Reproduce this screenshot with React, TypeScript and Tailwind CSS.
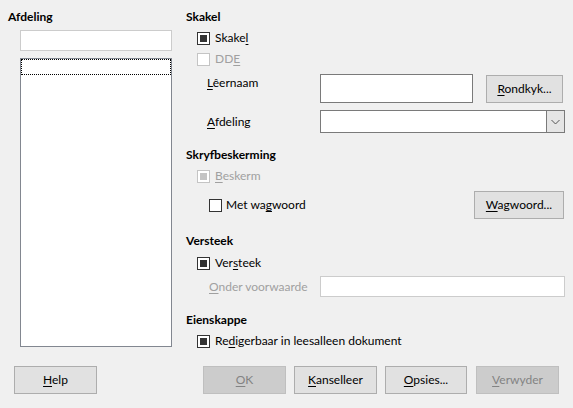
import React from "react";

const dis = "text-[#a0a0a0]";

function U({ children }: { children: React.ReactNode }) {
  return <span className="underline underline-offset-2 decoration-1">{children}</span>;
}

function Check({ checked, disabled }: { checked?: boolean; disabled?: boolean }) {
  return (
    <span
      className={
        "flex w-[13px] h-[13px] shrink-0 items-center justify-center border bg-white " +
        (disabled ? "border-[#c4c4c4]" : "border-[#333333]")
      }
    >
      {checked && <span className={"w-[7px] h-[7px] " + (disabled ? "bg-[#c4c4c4]" : "bg-[#333333]")} />}
    </span>
  );
}

function Btn({
  children,
  w,
  disabled,
}: {
  children: React.ReactNode;
  w: string;
  disabled?: boolean;
}) {
  return (
    <div
      className={
        "flex h-[28px] items-center justify-center border " +
        w +
        " " +
        (disabled
          ? "bg-[#cccccc] border-[#bfbfbf] text-[#838383]"
          : "bg-[#e1e1e1] border-[#adadad] text-black")
      }
    >
      {children}
    </div>
  );
}

function Header({ children, className = "" }: { children: React.ReactNode; className?: string }) {
  return <div className={"h-[18px] flex items-center font-bold " + className}>{children}</div>;
}

export default function App() {
  return (
    <div
      className="w-[573px] h-[408px] bg-[#f0f0f0] text-black text-[12px] leading-none flex flex-col overflow-hidden"
      style={{ fontFamily: "Lato, 'Liberation Sans', sans-serif" }}
    >
      <div className="flex h-[356px]">
        {/* Left column */}
        <div className="w-[186px] shrink-0 pt-[8px] pl-[8px]">
          <Header>Afdeling</Header>
          <div className="ml-[12px] mt-[4px] w-[152px] h-[21px] bg-white border border-[#cccccc]" />
          <div className="ml-[12px] mt-[7px] w-[152px] h-[289px] bg-white border border-[#828790]">
            <div className="h-[16px] border border-dotted border-black" />
          </div>
        </div>

        {/* Right column */}
        <div className="flex-1 pt-[8px]">
          <Header>Skakel</Header>
          <div className="h-[24px] flex items-center ml-[11px] gap-[5px]">
            <Check checked />
            <span>
              Skake<U>l</U>
            </span>
          </div>
          <div className={"h-[18px] flex items-center ml-[11px] gap-[5px] " + dis}>
            <Check disabled />
            <span>
              DD<U>E</U>
            </span>
          </div>
          <div className="mt-[6px] h-[29px] flex items-start">
            <div className="ml-[21px] w-[113px] pt-[3px]">
              <U>L</U>êernaam
            </div>
            <div className="w-[153px] h-[29px] bg-white border border-[#7a7a7a]" />
            <div className="ml-[13px] mt-[1px]">
              <Btn w="w-[77px]">
                <span>
                  <U>R</U>ondkyk...
                </span>
              </Btn>
            </div>
          </div>
          <div className="mt-[7px] h-[23px] flex items-center">
            <div className="ml-[21px] w-[113px]">
              <U>A</U>fdeling
            </div>
            <div className="w-[245px] h-[23px] bg-white border border-[#7a7a7a] flex justify-end">
              <div className="w-[18px] h-full bg-[#e5e5e5] border-l border-[#7a7a7a] flex items-center justify-center">
                <svg width="9" height="6" viewBox="0 0 9 6">
                  <path d="M0.5 1 L4.5 5 L8.5 1" fill="none" stroke="#555" strokeWidth="1" />
                </svg>
              </div>
            </div>
          </div>

          <Header className="mt-[13px]">Skryfbeskerming</Header>
          <div className={"mt-[3px] h-[18px] flex items-center ml-[11px] gap-[5px] " + dis}>
            <Check checked disabled />
            <span>
              <U>B</U>eskerm
            </span>
          </div>
          <div className="mt-[6px] h-[28px] flex items-center">
            <div className="ml-[23px] flex items-center gap-[4px] w-[265px]">
              <Check />
              <span>
                Met wa<U>g</U>woord
              </span>
            </div>
            <Btn w="w-[90px]">
              <span>
                <U>W</U>agwoord...
              </span>
            </Btn>
          </div>

          <Header className="mt-[13px]">Versteek</Header>
          <div className="mt-[4px] h-[18px] flex items-center ml-[11px] gap-[5px]">
            <Check checked />
            <span>
              Ver<U>s</U>teek
            </span>
          </div>
          <div className="mt-[4px] h-[21px] flex items-center">
            <div className={"ml-[23px] w-[111px] " + dis}>
              <U>O</U>nder voorwaarde
            </div>
            <div className="w-[245px] h-[21px] bg-white border border-[#cccccc]" />
          </div>

          <Header className="mt-[14px]">Eienskappe</Header>
          <div className="mt-[3px] h-[18px] flex items-center ml-[11px] gap-[5px]">
            <Check checked />
            <span>
              Re<U>d</U>igerbaar in leesalleen dokument
            </span>
          </div>
        </div>
      </div>

      {/* Bottom buttons */}
      <div className="mt-[10px] flex items-center">
        <div className="ml-[14px]">
          <Btn w="w-[83px]">
            <span>
              <U>H</U>elp
            </span>
          </Btn>
        </div>
        <div className="ml-[106px]">
          <Btn w="w-[83px]" disabled>
            <span>
              <U>O</U>K
            </span>
          </Btn>
        </div>
        <div className="ml-[8px]">
          <Btn w="w-[83px]">
            <span>
              <U>K</U>anselleer
            </span>
          </Btn>
        </div>
        <div className="ml-[8px]">
          <Btn w="w-[82px]">
            <span>
              <U>O</U>psies...
            </span>
          </Btn>
        </div>
        <div className="ml-[9px]">
          <Btn w="w-[83px]" disabled>
            <span>
              <U>V</U>erwyder
            </span>
          </Btn>
        </div>
      </div>
    </div>
  );
}
